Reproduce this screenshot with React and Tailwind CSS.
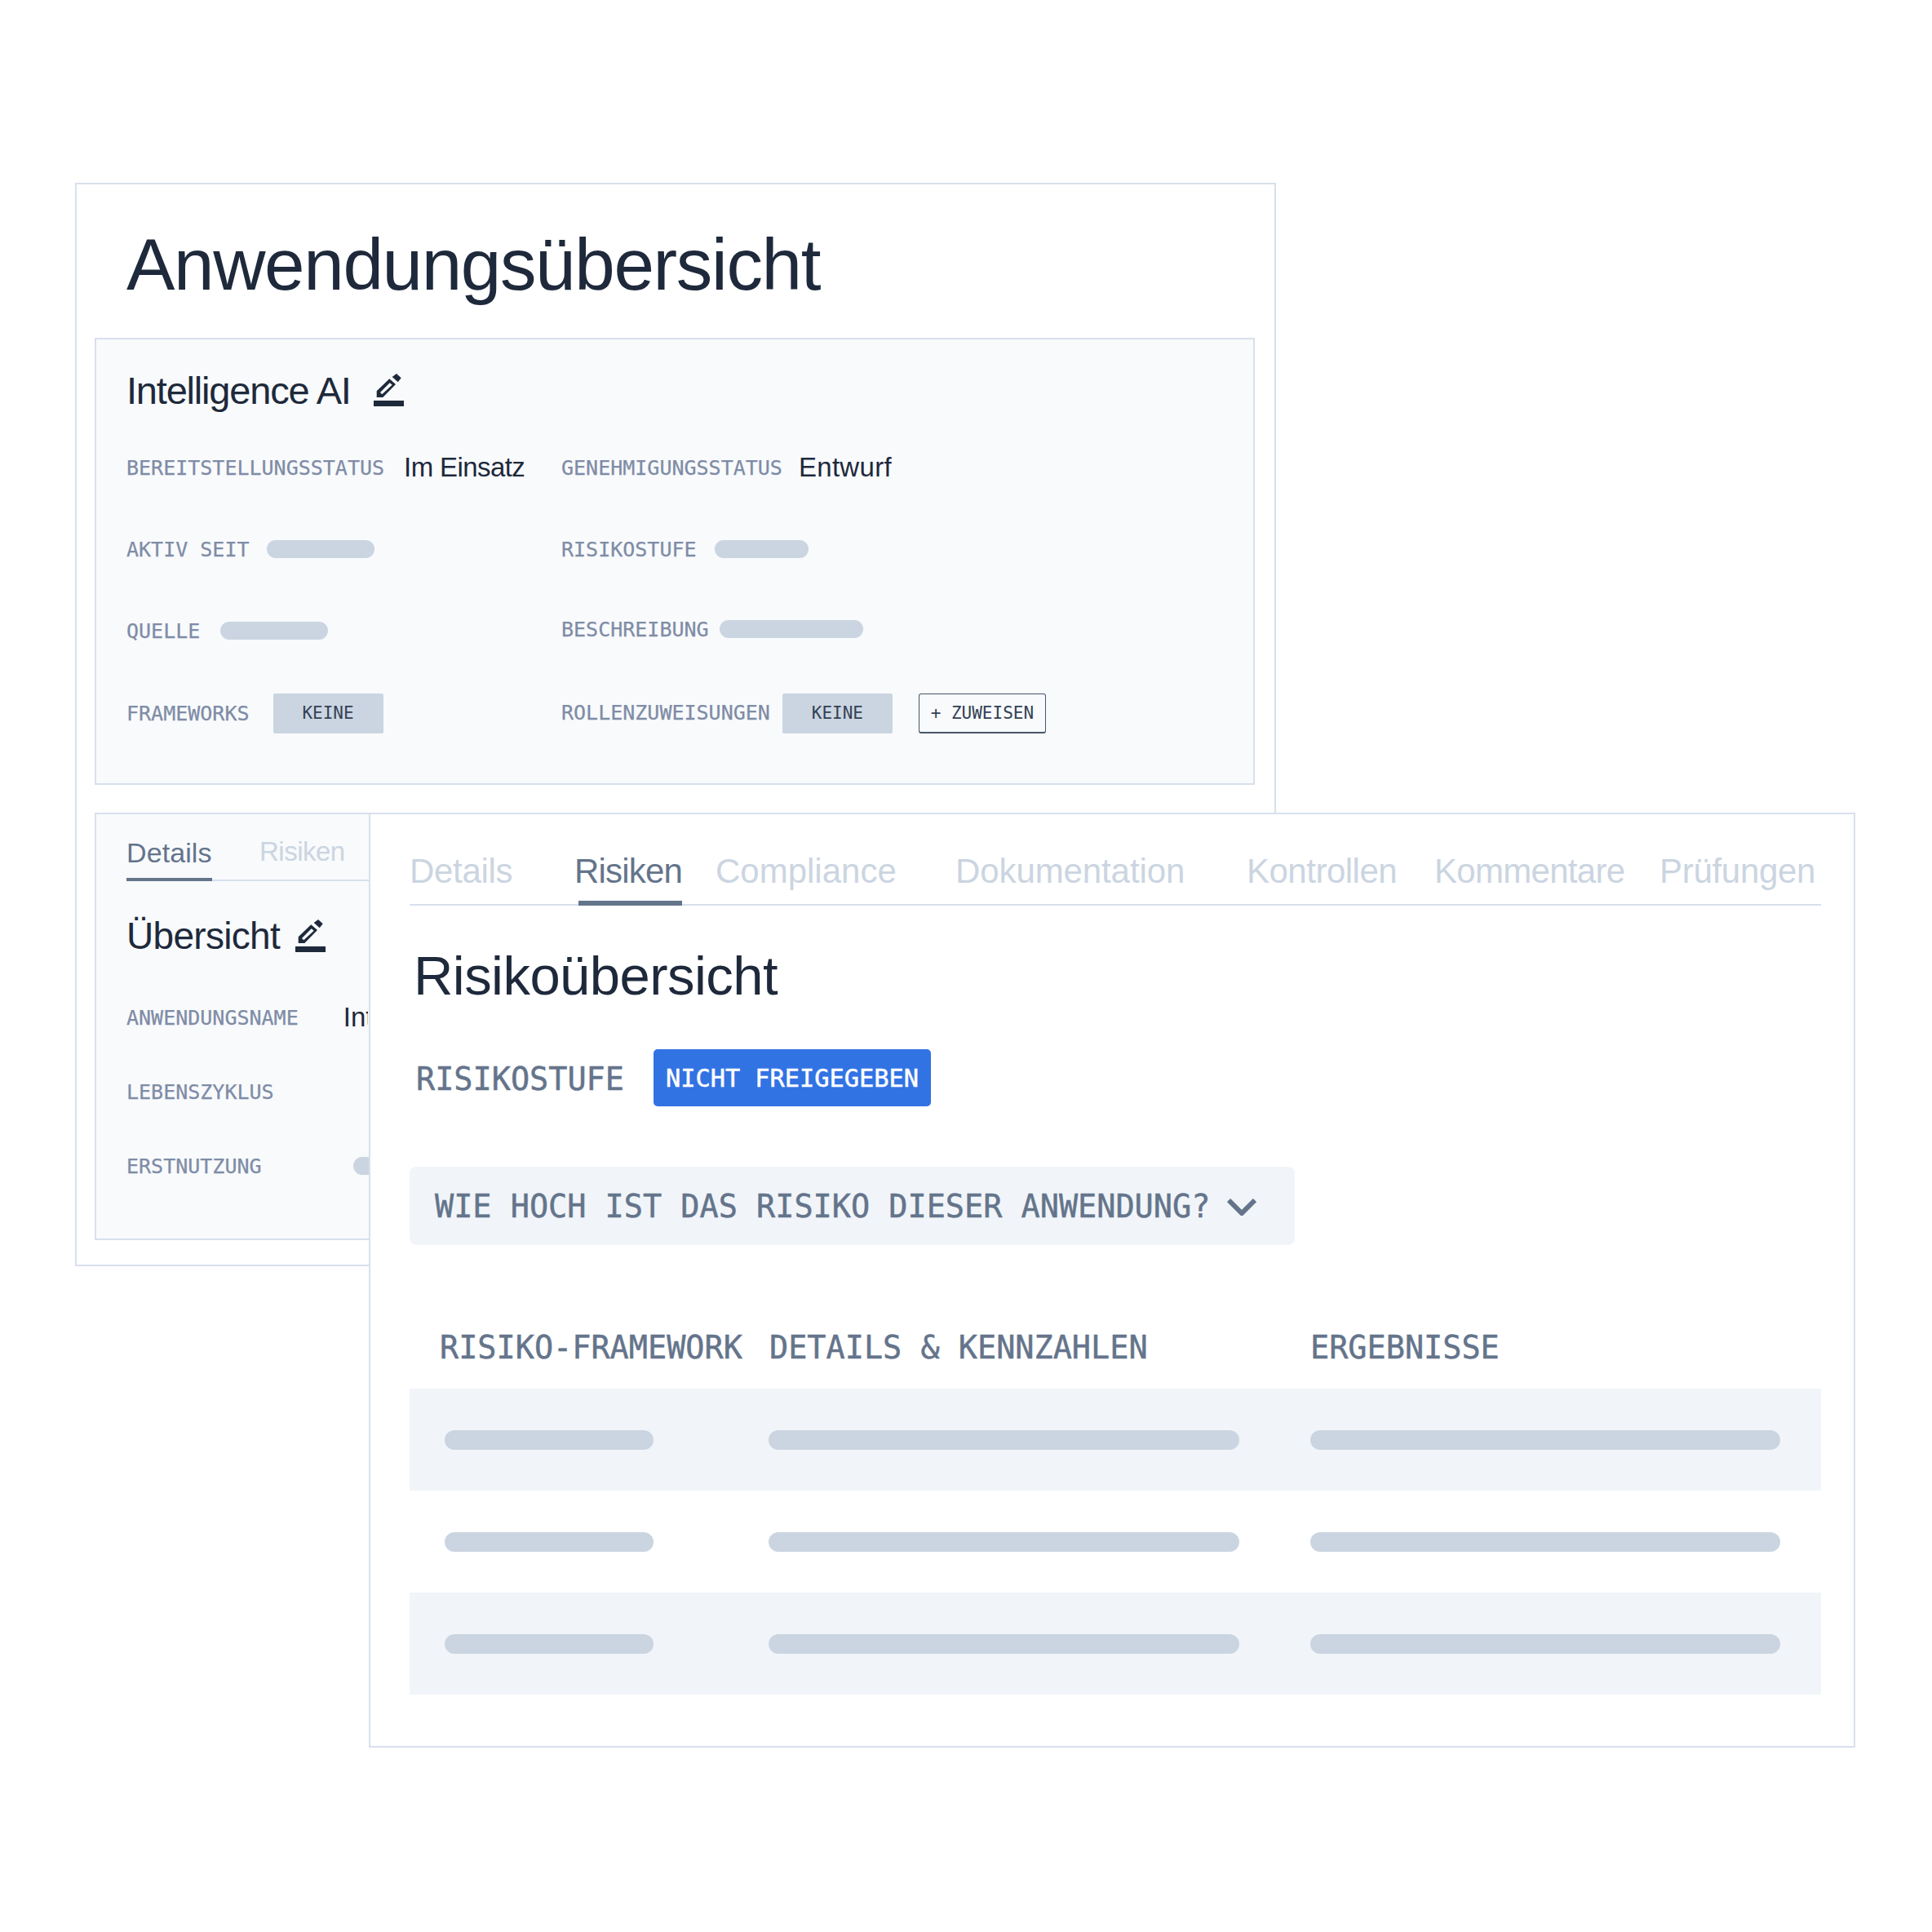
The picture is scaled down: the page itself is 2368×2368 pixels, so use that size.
import React from "react";

const sans = "font-['Liberation_Sans',Arial,sans-serif]";
const mono = "font-['DejaVu_Sans_Mono','Liberation_Mono',monospace]";
const monoLarge = "text-[38.5px] text-[#64748b] [-webkit-text-stroke:0.5px_currentColor]";

const EditIcon = () => (
  <svg viewBox="0 0 37 40" className="w-[37px] h-[40px] shrink-0 text-[#1e293b]" fill="currentColor">
    <rect x="0" y="33" width="37" height="7" />
    <path
      fillRule="evenodd"
      d="M3.7 21.3 19.3 6.3 27 13 11.3 29H3.7ZM8 23 10.3 25.3 22.7 13.7 19.7 11.3Z"
    />
    <path d="M28 0 33.7 5.3 29.7 10.3 22.7 4Z" />
  </svg>
);

const Label = ({ children, className = "" }) => (
  <span className={`${mono} text-[25px] leading-[30px] text-[#7f8ca6] whitespace-nowrap [-webkit-text-stroke:0.25px_currentColor] ${className}`}>
    {children}
  </span>
);

const Value = ({ children, className = "" }) => (
  <span className={`${sans} text-[33px] leading-[40px] text-[#1e293b] whitespace-nowrap mb-[3px] ${className}`}>
    {children}
  </span>
);

const Pill = ({ className = "" }) => <div className={`h-[22px] rounded-full bg-[#cbd5e1] shrink-0 ${className}`} />;

const Badge = ({ className = "" }) => (
  <span className={`${mono} flex items-center justify-center w-[135px] h-[49px] pt-[2px] rounded-[2px] bg-[#cbd5e1] text-[21px] text-[#334155] ${className}`}>
    KEINE
  </span>
);

const frontTabs = [
  { name: "Details", width: "w-[202px]", tracking: "tracking-[-0.3px]" },
  { name: "Risiken", width: "w-[173px]", tracking: "tracking-[-0.8px]", active: true },
  { name: "Compliance", width: "w-[294px]", tracking: "tracking-[0px]" },
  { name: "Dokumentation", width: "w-[357px]", tracking: "tracking-[-0.1px]" },
  { name: "Kontrollen", width: "w-[230px]", tracking: "tracking-[-0.5px]" },
  { name: "Kommentare", width: "w-[276px]", tracking: "tracking-[-0.7px]" },
  { name: "Prüfungen", width: "w-[198px]", tracking: "tracking-[-0.3px]" },
];

const rows = [true, false, true];

const App = () => {
  return (
    <div className={`relative w-[2368px] h-[2368px] bg-white overflow-hidden pt-[224px] pl-[92px] ${sans}`}>
      {/* Anwendungsübersicht, sits behind */}
      <div className="w-[1472px] h-[1328px] border-2 border-[#d8e0ec] bg-white pl-[22px] pr-[24px]">
        <div className="h-[188px] pl-[39px] flex items-center pt-[8px]">
          <h1 className="text-[89px] leading-none tracking-[-1.35px] text-[#1e293b]">Anwendungsübersicht</h1>
        </div>

        <div className="h-[548px] border-2 border-[#d8e0ec] bg-[#f8fafc] pl-[37px]">
          <div className="h-[108px] flex items-center gap-[28px] pt-[16px]">
            <h2 className="text-[47px] leading-none tracking-[-1.2px] text-[#1e293b]">Intelligence AI</h2>
            <EditIcon />
          </div>

          <div className="grid grid-cols-[533px_1fr]">
            <div className="h-[100px] flex items-center gap-[24px]">
              <Label>BEREITSTELLUNGSSTATUS</Label>
              <Value className="tracking-[-0.6px]">Im Einsatz</Value>
            </div>
            <div className="h-[100px] flex items-center gap-[20px]">
              <Label>GENEHMIGUNGSSTATUS</Label>
              <Value className="tracking-[0.3px]">Entwurf</Value>
            </div>

            <div className="h-[100px] flex items-center gap-[21px]">
              <Label>AKTIV SEIT</Label>
              <Pill className="w-[132px] mb-[3px]" />
            </div>
            <div className="h-[100px] flex items-center gap-[22px]">
              <Label>RISIKOSTUFE</Label>
              <Pill className="w-[115px] mb-[3px]" />
            </div>

            <div className="h-[100px] flex items-center gap-[25px]">
              <Label>QUELLE</Label>
              <Pill className="w-[132px] mb-[3px]" />
            </div>
            <div className="h-[100px] flex items-center gap-[13px] pb-[4px]">
              <Label>BESCHREIBUNG</Label>
              <Pill className="w-[176px] mb-[3px]" />
            </div>

            <div className="h-[100px] flex items-center gap-[29px]">
              <Label className="pt-[2px]">FRAMEWORKS</Label>
              <Badge />
            </div>
            <div className="h-[100px] flex items-center">
              <Label className="mr-[15px]">ROLLENZUWEISUNGEN</Label>
              <Badge />
              <button className={`${mono} ml-[32px] w-[156px] h-[49px] pt-[2px] rounded-[3px] border border-b-2 border-[#475569] text-[21px] text-[#334155]`}>
                + ZUWEISEN
              </button>
            </div>
          </div>
        </div>

        <div className="mt-[34px] h-[524px] border-2 border-[#d8e0ec] bg-[#f8fafc] pl-[37px] pr-[10px]">
          <div className="h-[82px] border-b-2 border-[#d8e0ec] flex items-end">
            <div className="w-[163px]">
              <span className="inline-block border-b-4 border-[#64748b] text-[34px] leading-[47px] tracking-[0.1px] text-[#64748b] pb-[7px] -mb-[2px] w-[105px]">
                Details
              </span>
            </div>
            <span className="text-[33px] leading-[47px] tracking-[-0.5px] text-[#cbd5e1] pb-[11px]">Risiken</span>
          </div>

          <div className="h-[123px] flex items-center gap-[19px] pt-[11px]">
            <h2 className="text-[46px] leading-none tracking-[-0.7px] text-[#1e293b]">Übersicht</h2>
            <EditIcon />
          </div>

          <div className="h-[90px] flex items-center gap-[55px]">
            <Label>ANWENDUNGSNAME</Label>
            <div className="w-[30px] overflow-hidden flex">
              <Value>Intelligence AI</Value>
            </div>
          </div>
          <div className="h-[91px] flex items-center">
            <Label>LEBENSZYKLUS</Label>
          </div>
          <div className="h-[92px] flex items-center gap-[112px]">
            <Label>ERSTNUTZUNG</Label>
            <Pill className="w-[132px] mb-[3px]" />
          </div>
        </div>
      </div>

      {/* Risiken panel, lies over the first one */}
      <div className="absolute left-[452px] top-[996px] w-[1822px] h-[1146px] border-2 border-[#d8e0ec] bg-white pl-[48px] pr-[40px]">
        <div className="h-[112px] flex items-end border-b-2 border-[#d8e0ec]">
          {frontTabs.map((tab) => (
            <div key={tab.name} className={`${tab.width} ${tab.tracking} shrink-0 h-[65px] relative text-[42px] leading-[50px] ${tab.active ? "text-[#64748b]" : "text-[#cbd5e1]"}`}>
              {tab.name}
              {tab.active && <div className="absolute left-[5px] bottom-[-2px] w-[127px] h-[6px] bg-[#64748b]" />}
            </div>
          ))}
        </div>

        <div className="h-[170px] flex items-center pl-[5px]">
          <h2 className="text-[67px] leading-none tracking-[-0.55px] text-[#1e293b]">Risikoübersicht</h2>
        </div>

        <div className={`${mono} ${monoLarge} mt-[6px] h-[70px] flex items-center pl-[8px]`}>
          <span className="whitespace-nowrap pt-[3px]">RISIKOSTUFE</span>
          <span className="ml-[36px] w-[340px] h-[70px] pt-[2px] rounded-[5px] bg-[#3273e4] text-white text-[30.3px] flex items-center justify-center whitespace-nowrap">
            NICHT FREIGEGEBEN
          </span>
        </div>

        <div className={`${mono} ${monoLarge} mt-[74px] w-[1085px] h-[96px] pt-[2px] rounded-[8px] bg-[#f1f5f9] flex items-center pl-[31px] whitespace-nowrap`}>
          WIE HOCH IST DAS RISIKO DIESER ANWENDUNG?
          <svg viewBox="0 0 36 22" className="ml-[21px] w-[36px] h-[22px]" fill="none" stroke="currentColor" strokeWidth="6">
            <path d="M2 3 18 19 34 3" />
          </svg>
        </div>

        <div className={`${mono} ${monoLarge} mt-[96px] mb-[20px] h-[60px] grid grid-cols-[404px_663px_1fr] items-center pl-[37px] whitespace-nowrap`}>
          <span>RISIKO-FRAMEWORK</span>
          <span>DETAILS &amp; KENNZAHLEN</span>
          <span>ERGEBNISSE</span>
        </div>

        {rows.map((shaded, index) => (
          <div key={index} className={`h-[125px] grid grid-cols-[397px_664px_1fr] items-center pl-[43px] ${shaded ? "bg-[#f1f5f9]" : ""}`}>
            <Pill className="w-[256px] h-[24px]" />
            <Pill className="w-[577px] h-[24px]" />
            <Pill className="w-[576px] h-[24px]" />
          </div>
        ))}
      </div>
    </div>
  );
};

export default App;
